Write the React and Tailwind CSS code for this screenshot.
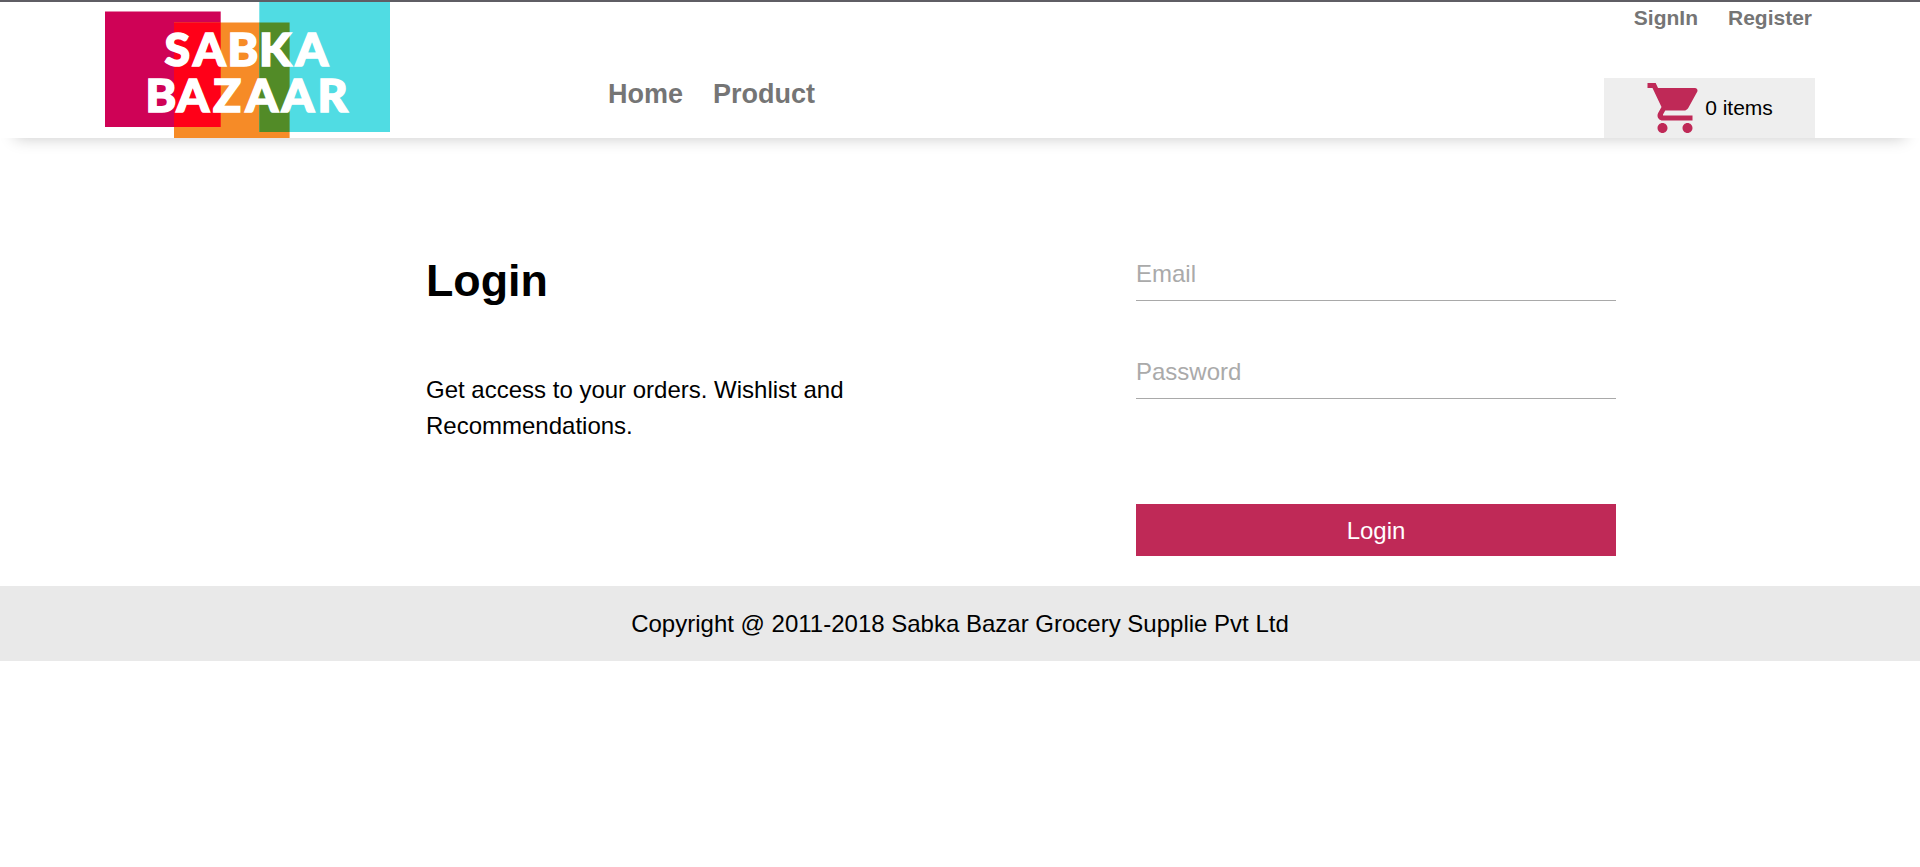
function Logo() {
  return (
    <svg width="285" height="136" viewBox="0 0 285 136" className="block" role="img" aria-label="Sabka Bazaar">
      <rect x="0" y="9.5" width="115.7" height="115.5" fill="#cf0256" />
      <rect x="69" y="20.5" width="115.6" height="115.5" fill="#f68b27" />
      <rect x="154.3" y="0" width="130.7" height="130" fill="#50dce3" />
      <rect x="69" y="20.5" width="46.7" height="104.5" fill="#ff0018" />
      <rect x="154.3" y="20.5" width="30.3" height="109.5" fill="#528b27" />
      <text fill="#fff" stroke="#fff" strokeWidth="1.6" fontFamily="Lato, sans-serif" fontWeight="900" fontSize="46.5">
        <tspan x="59.5 88 122.5 154 190.5" y="63.6">SABKA</tspan>
        <tspan x="40.5 71.5 108 140.5 176.5 212.5" y="109.6">BAZAAR</tspan>
      </text>
    </svg>
  );
}

function CartIcon() {
  return (
    <svg width="60" height="60" viewBox="0 0 24 24" fill="#bf2957" className="shrink-0">
      <path d="M7 18c-1.1 0-1.99.9-1.99 2S5.9 22 7 22s2-.9 2-2-.9-2-2-2zM1 2v2h2l3.6 7.59-1.35 2.45c-.16.28-.25.61-.25.96 0 1.1.9 2 2 2h12v-2H7.42c-.14 0-.25-.11-.25-.25l.03-.12.9-1.63h7.45c.75 0 1.41-.41 1.75-1.03l3.58-6.49c.08-.14.12-.31.12-.48 0-.55-.45-1-1-1H5.21l-.94-2H1zm16 16c-1.1 0-1.99.9-1.99 2s.89 2 1.99 2 2-.9 2-2-.9-2-2-2z" />
    </svg>
  );
}

function Header() {
  return (
    <header className="flex h-[138px] border-t-2 border-[#5f5e64] bg-white pl-[105px] pr-[105px] shadow-[0_15px_15px_-15px_rgba(0,0,0,0.22)]">
      <Logo />
      <nav className="ml-[218px] flex gap-[30px] pt-[76px] text-[27px] leading-8 font-bold text-[#757575]">
        <a href="#">Home</a>
        <a href="#">Product</a>
      </nav>
      <div className="ml-auto flex w-[211px] flex-col justify-between">
        <div className="flex justify-end gap-[30px] pr-[3px] text-[21px] leading-8 font-bold text-[#757575]">
          <a href="#">SignIn</a>
          <a href="#">Register</a>
        </div>
        <button className="flex h-[60px] items-center justify-center bg-[#eee] pr-px text-[21px] text-black">
          <CartIcon />
          <span>0 items</span>
        </button>
      </div>
    </header>
  );
}

export default function App() {
  return (
    <div className="min-h-[867px] bg-white font-['Liberation_Sans',Arial,sans-serif] text-2xl leading-9 text-black">
      <Header />
      <main className="flex h-[448px] pl-[426px]">
        <section className="w-[710px] pt-[108px]">
          <h1 className="text-[44.8px] leading-[68px] font-bold">Login</h1>
          <p className="mt-[58px] w-[480px]">Get access to your orders. Wishlist and Recommendations.</p>
        </section>
        <form className="flex w-[480px] flex-col pt-[113px]">
          <input
            type="email"
            placeholder="Email"
            className="h-[50px] border-b border-[#a9a9a9] pb-[3px] outline-none placeholder:text-[#aaa]"
          />
          <input
            type="password"
            placeholder="Password"
            className="mt-12 h-[50px] border-b border-[#a9a9a9] pb-[3px] outline-none placeholder:text-[#aaa]"
          />
          <button type="button" className="mt-[105px] h-[52px] bg-[#bf2957] pt-0.5 text-white">
            Login
          </button>
        </form>
      </main>
      <footer className="flex h-[75px] items-center justify-center bg-[#e9e9e9]">
        Copyright @ 2011-2018 Sabka Bazar Grocery Supplie Pvt Ltd
      </footer>
    </div>
  );
}
